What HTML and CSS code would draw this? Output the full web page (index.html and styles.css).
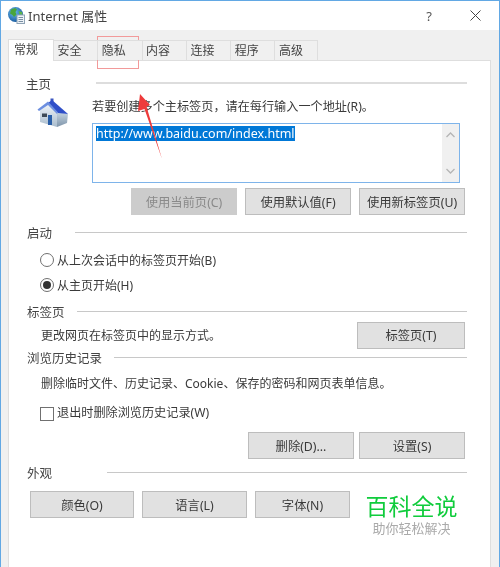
FILE: index.html
```html
<!DOCTYPE html>
<html lang="zh-CN">
<head>
    <meta charset="UTF-8">
    <meta name="viewport" content="width=device-width, initial-scale=1.0">
    <title>Internet 属性</title>
    <link rel="stylesheet" href="styles.css">
</head>
<body>
    <div class="window">
        <div class="titlebar">
            <svg class="globe" width="17" height="17" viewBox="0 0 17 17">
                <defs>
                    <radialGradient id="sea" cx="40%" cy="35%" r="70%">
                        <stop offset="0" stop-color="#6fc0f0"/>
                        <stop offset="1" stop-color="#14569c"/>
                    </radialGradient>
                </defs>
                <circle cx="7.5" cy="7.5" r="7.5" fill="url(#sea)"/>
                <path d="M3 2.5 L7 1 L9 2.5 L7.5 5 L8.5 7.5 L6 10 L4.5 8 L2 6.5 Z" fill="#4aa53c"/>
                <path d="M10.5 4 L14 5 L14.5 8 L11.5 7.5 Z" fill="#5db548"/>
                <rect x="9" y="8" width="7.5" height="8.5" fill="#eef3f7" stroke="#8fa3b5" stroke-width="1"/>
                <path d="M10.5 10.5 H15 M10.5 12.5 H15 M10.5 14.5 H15" stroke="#7a8fa3" stroke-width="1"/>
            </svg>
            <span class="title">Internet 属性</span>
            <span class="help">?</span>
            <svg class="close" width="11" height="11" viewBox="0 0 11 11">
                <path d="M0.5 0.5 L10.5 10.5 M10.5 0.5 L0.5 10.5" stroke="#444" stroke-width="1" fill="none"/>
            </svg>
        </div>

        <div class="content">
            <div class="tabs">
                <div class="tab active">常规</div>
                <div class="tab">安全</div>
                <div class="tab">隐私</div>
                <div class="tab">内容</div>
                <div class="tab">连接</div>
                <div class="tab">程序</div>
                <div class="tab">高级</div>
            </div>

            <div class="panel">
                <div class="head head-home"><span>主页</span><i></i></div>
                <div class="home-row">
                    <svg class="house" width="33" height="30" viewBox="0 0 33 30">
                        <defs>
                            <linearGradient id="wall" x1="0" y1="0" x2="0" y2="1">
                                <stop offset="0" stop-color="#f2f6fa"/>
                                <stop offset="1" stop-color="#a9bccd"/>
                            </linearGradient>
                            <linearGradient id="side" x1="0" y1="0" x2="0" y2="1">
                                <stop offset="0" stop-color="#c6d5e2"/>
                                <stop offset="1" stop-color="#7f95aa"/>
                            </linearGradient>
                        </defs>
                        <rect x="13.500" y="0.500" width="3" height="4" fill="#3a55c0"/>
                        <path d="M20 14 L31 16 L30 25 L20 29 Z" fill="url(#side)"/>
                        <path d="M3 12 L11 5 L20 14 L20 29 L3 24 Z" fill="url(#wall)"/>
                        <path d="M11 5 L15 2 L31 16 L21 15 Z" fill="#2f4fc8"/>
                        <path d="M0.500 11.500 L11 3.500 L21 14.500 L20 16 L11 7 L2 13 Z" fill="#6d8fe0"/>
                        <rect x="5" y="15.500" width="5" height="3.500" fill="#3e4a57"/>
                        <rect x="11" y="17" width="4" height="10" fill="#2a5fa8"/>
                    </svg>
                    <div class="home-main">
                        <p class="home-hint">若要创建多个主标签页，请在每行输入一个地址(R)。</p>
                        <div class="urlbox">
                            <div class="urltext"><span class="selected">http://www.baidu.com/index.html</span></div>
                            <div class="scroll">
                                <svg width="9" height="6" viewBox="0 0 9 6"><path d="M0.500 5 L4.500 1 L8.500 5" fill="none" stroke="#b5b5b5" stroke-width="1.300"/></svg>
                                <svg width="9" height="6" viewBox="0 0 9 6"><path d="M0.500 1 L4.500 5 L8.500 1" fill="none" stroke="#b5b5b5" stroke-width="1.300"/></svg>
                            </div>
                        </div>
                    </div>
                </div>
                <div class="btn-row home-btns">
                    <button class="btn disabled w106">使用当前页(C)</button>
                    <button class="btn w106">使用默认值(F)</button>
                    <button class="btn w106">使用新标签页(U)</button>
                </div>

                <div class="head head-start"><span>启动</span><i></i></div>
                <div class="option first">
                    <span class="radio"></span>
                    <span>从上次会话中的标签页开始(B)</span>
                </div>
                <div class="option second">
                    <span class="radio checked"></span>
                    <span>从主页开始(H)</span>
                </div>

                <div class="head head-tabs"><span>标签页</span><i></i></div>
                <div class="tabs-row">
                    <span class="indent">更改网页在标签页中的显示方式。</span>
                    <button class="btn w108">标签页(T)</button>
                </div>

                <div class="head"><span>浏览历史记录</span><i></i></div>
                <p class="indent history-text">删除临时文件、历史记录、Cookie、保存的密码和网页表单信息。</p>
                <div class="option history-check">
                    <span class="checkbox"></span>
                    <span>退出时删除浏览历史记录(W)</span>
                </div>
                <div class="btn-row history-btns">
                    <button class="btn w106">删除(D)...</button>
                    <button class="btn w106">设置(S)</button>
                </div>

                <div class="head head-look"><span>外观</span><i></i></div>
                <div class="look-btns">
                    <button class="btn w104">颜色(O)</button>
                    <button class="btn w105">语言(L)</button>
                    <button class="btn w95">字体(N)</button>
                </div>
            </div>
        </div>

        <!-- annotations drawn on top of the screenshot -->
        <div class="mark"></div>
        <svg class="arrow" width="30" height="70" viewBox="0 0 30 70">
            <path d="M5 1 L15 12 L11.500 13.500 L27 66 L9.500 16 L3 18 Z" fill="#ee3b3b"/>
        </svg>
        <div class="brand">
            <div class="brand-name">百科全说</div>
            <div class="brand-sub">助你轻松解决</div>
        </div>
    </div>
</body>
</html>
```

FILE: styles.css
```css
* {
    box-sizing: border-box;
}
html, body {
    margin: 0;
    padding: 0;
}
body {
    width: 500px;
    height: 567px;
    overflow: hidden;
    font-family: "Noto Sans", "Noto Sans CJK SC", sans-serif;
    font-size: 12px;
    color: #3a3a3a;
}
p {
    margin: 0;
}
.window {
    position: relative;
    width: 500px;
    height: 567px;
    overflow: hidden;
    background-color: #f0f0f0;
    border: 1px solid #62a8e4;
    border-bottom: none;
    display: flex;
    flex-direction: column;
    filter: blur(0.3px);
}

/* title bar */
.titlebar {
    height: 29px;
    flex-shrink: 0;
    background-color: #fff;
    display: flex;
    align-items: center;
    padding-left: 7px;
}
.globe {
    margin-right: 3px;
}
.title {
    font-size: 13px;
    color: #444;
}
.help {
    margin-left: auto;
    font-size: 13px;
    color: #555;
}
.close {
    margin-left: 38px;
    margin-right: 18px;
}

/* tabs and panel */
.content {
    flex: 1;
    padding: 9px 8px 0 7px;
    display: flex;
    flex-direction: column;
}
.tabs {
    display: flex;
    height: 21px;
    align-items: flex-end;
    position: relative;
    z-index: 1;
}
.tab {
    width: 44.300px;
    height: 20px;
    padding-left: 3.500px;
    background-color: #f0f0f0;
    border: 1px solid #dedede;
    border-bottom: none;
    border-left: none;
    font-size: 12px;
    line-height: 20px;
    color: #444;
}
.tab.active {
    width: 46px;
    height: 22px;
    padding-left: 5px;
    margin-bottom: -1px;
    background-color: #fff;
    border-left: 1px solid #dedede;
}
.tab:last-child {
    width: 43px;
}
.panel {
    flex: 1;
    background-color: #fff;
    border: 1px solid #dedede;
    border-bottom: none;
    padding: 13px 23px 0 18px;
}

/* section headings */
.head {
    display: flex;
    align-items: center;
    height: 18px;
    font-size: 12.500px;
    color: #444;
}
.head i {
    flex: 1;
    height: 1px;
    background-color: #c8c8c8;
    margin-left: 12px;
}
.head-home i {
    height: 2px;
    background-color: #ddd;
    margin-left: 45px;
}
.head-home span {
    margin-left: -1px;
}
.head-start {
    margin-top: 8px;
}
.head-start i {
    margin-left: 23px;
}
.head-tabs {
    margin-top: 8px;
}
.head-look {
    margin-top: 4px;
}
.head-look i {
    margin-left: 55px;
}

/* home page block */
.home-row {
    display: flex;
    margin-top: 6px;
}
.house {
    margin-left: 10px;
    margin-right: 22px;
    flex-shrink: 0;
}
.home-main {
    flex: 1;
}
.home-hint {
    font-size: 12.150px;
    line-height: 18px;
    white-space: nowrap;
}
.urlbox {
    margin-top: 7px;
    width: 368px;
    height: 60px;
    border: 1px solid #7eb4ea;
    display: flex;
    justify-content: space-between;
}
.urltext {
    padding: 2px 0 0 3px;
    font-size: 12.500px;
    line-height: 15px;
}
.selected {
    background-color: #0078d7;
    color: #fff;
    display: inline-block;
}
.scroll {
    width: 17px;
    background-color: #f0f0f0;
    display: flex;
    flex-direction: column;
    align-items: center;
    justify-content: space-between;
    padding: 8px 0;
}
.scroll svg {
    display: block;
}

/* buttons */
.btn {
    height: 27px;
    padding: 0;
    background-color: #e1e1e1;
    border: 1px solid #bdbdbd;
    font-family: inherit;
    font-size: 12.300px;
    color: #3a3a3a;
}
.btn.disabled {
    background-color: #ccc;
    border-color: #ccc;
    color: #8a8a8a;
}
.w95 {
    width: 95px;
}
.w104 {
    width: 104px;
}
.w105 {
    width: 105px;
}
.w106 {
    width: 106px;
}
.w108 {
    width: 108px;
}
.btn-row {
    display: flex;
    justify-content: flex-end;
    padding-right: 2px;
}
.home-btns {
    margin-top: 5px;
    gap: 8px;
}
.history-btns {
    margin-top: 11px;
    gap: 5px;
}
.look-btns {
    margin-top: 10px;
    margin-left: 3px;
    display: flex;
    gap: 8px;
}

/* startup and history rows */
.option {
    display: flex;
    align-items: center;
    height: 18px;
    margin-left: 13px;
    gap: 3px;
}
.option.first {
    margin-top: 10px;
}
.option.second {
    margin-top: 7px;
}
.radio {
    width: 14px;
    height: 14px;
    border: 1px solid #707070;
    border-radius: 50%;
    background-color: #fff;
    display: flex;
    align-items: center;
    justify-content: center;
}
.radio.checked::after {
    content: "";
    width: 8px;
    height: 8px;
    border-radius: 50%;
    background-color: #333;
}
.checkbox {
    width: 14px;
    height: 14px;
    border: 1px solid #707070;
    background-color: #fff;
    margin-top: 3px;
}
.indent {
    margin-left: 14px;
}
.tabs-row {
    margin-top: 2px;
    height: 26px;
    display: flex;
    align-items: center;
    justify-content: space-between;
    padding-right: 2px;
}
.history-text {
    margin-top: 9px;
    line-height: 18px;
    white-space: nowrap;
}
.history-check {
    margin-top: 10px;
}
.history-check span:last-child {
    font-size: 12.150px;
}

/* overlays */
.mark {
    position: absolute;
    left: 96px;
    top: 35px;
    width: 42px;
    height: 33px;
    border: 1px solid #f29a9a;
}
.arrow {
    position: absolute;
    left: 134px;
    top: 92px;
}
.brand {
    position: absolute;
    left: 364px;
    top: 492px;
    width: 93px;
    text-align: center;
    font-family: "Liberation Sans", "Noto Sans CJK SC", sans-serif;
}
.brand-name {
    font-size: 23px;
    line-height: 28px;
    color: #10cc3c;
    white-space: nowrap;
}
.brand-sub {
    font-size: 13px;
    line-height: 16px;
    color: #aaa;
    white-space: nowrap;
}
```
